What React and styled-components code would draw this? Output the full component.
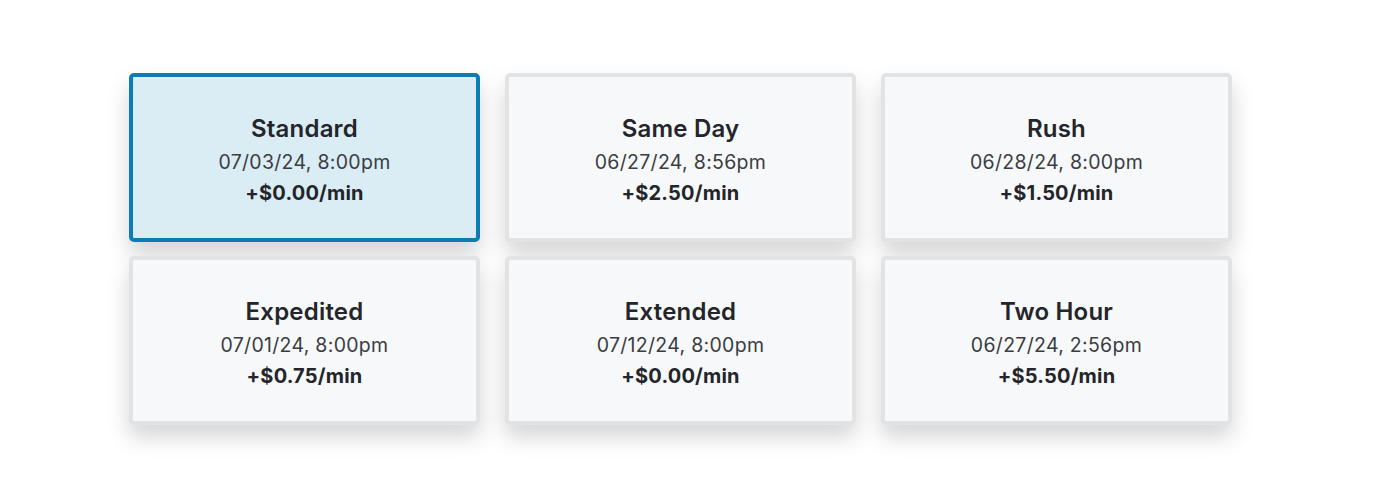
import React from 'react';
import styled, { createGlobalStyle } from 'styled-components';

const GlobalStyle = createGlobalStyle`
  html, body {
    margin: 0;
    padding: 0;
    background: #ffffff;
    font-family: Inter, "Noto Sans", sans-serif;
  }
`;

const Page = styled.div`
  padding: 73px 0 75px 129px;
`;

const Grid = styled.div`
  display: grid;
  grid-template-columns: repeat(3, 351px);
  column-gap: 25px;
  row-gap: 14px;
`;

const Card = styled.button`
  box-sizing: border-box;
  height: 169px;
  display: flex;
  flex-direction: column;
  align-items: center;
  justify-content: center;
  border: 4px solid ${p => (p.$selected ? '#0b7cb5' : '#e2e3e5')};
  border-radius: 5px;
  background: ${p => (p.$selected ? '#daecf4' : '#f7f8fa')};
  box-shadow: 0 12px 22px rgba(0, 0, 0, 0.17);
  font-family: inherit;
  color: #23252a;
  cursor: pointer;
  padding: 6px 0 0;
`;

const Name = styled.div`
  font-size: 24px;
  font-weight: 600;
  letter-spacing: 0.2px;
  line-height: 32px;
  margin-bottom: 2px;
`;

const DateText = styled.div`
  font-size: 19.5px;
  font-weight: 400;
  letter-spacing: 0.3px;
  line-height: 30px;
  color: #3a3d42;
`;

const Price = styled.div`
  font-size: 20px;
  font-weight: 700;
  letter-spacing: 0.2px;
  line-height: 32px;
`;

const options = [
  { name: 'Standard', date: '07/03/24, 8:00pm', price: '+$0.00/min', selected: true },
  { name: 'Same Day', date: '06/27/24, 8:56pm', price: '+$2.50/min' },
  { name: 'Rush', date: '06/28/24, 8:00pm', price: '+$1.50/min' },
  { name: 'Expedited', date: '07/01/24, 8:00pm', price: '+$0.75/min' },
  { name: 'Extended', date: '07/12/24, 8:00pm', price: '+$0.00/min' },
  { name: 'Two Hour', date: '06/27/24, 2:56pm', price: '+$5.50/min' },
];

export default function App() {
  return (
    <Page>
      <GlobalStyle />
      <Grid>
        {options.map(o => (
          <Card key={o.name} $selected={o.selected}>
            <Name>{o.name}</Name>
            <DateText>{o.date}</DateText>
            <Price>{o.price}</Price>
          </Card>
        ))}
      </Grid>
    </Page>
  );
}
